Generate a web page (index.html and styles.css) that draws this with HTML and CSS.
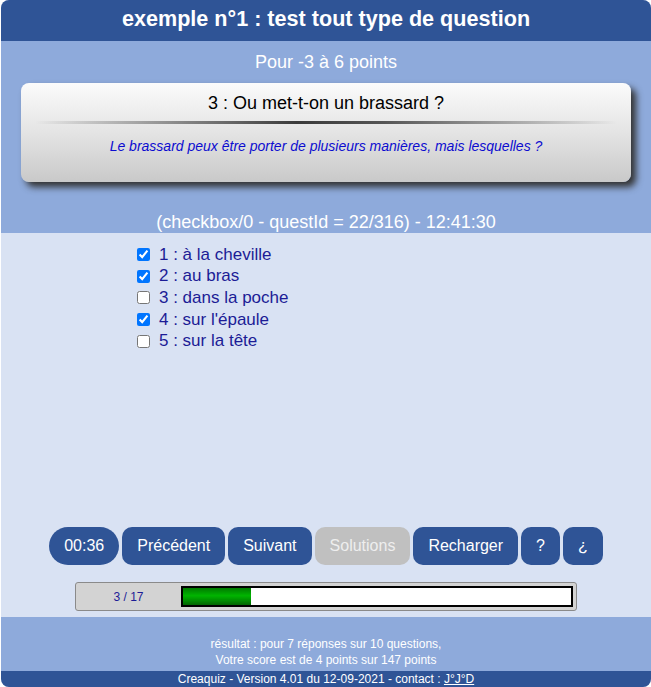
FILE: index.html
```html
<!DOCTYPE html>
<html lang="fr">
<head>
<meta charset="utf-8">
<title>Creaquiz</title>
<link rel="stylesheet" href="styles.css">
</head>
<body>
<div class="quiz">
  <div class="header">exemple n°1 : test tout type de question</div>
  <div class="top">
    <div class="points">Pour -3 à 6 points</div>
    <div class="card">
      <div class="card-title">3 : Ou met-t-on un brassard ?</div>
      <div class="sep"></div>
      <div class="card-desc">Le brassard peux être porter de plusieurs manières, mais lesquelles ?</div>
    </div>
    <div class="info">(checkbox/0 - questId = 22/316) - 12:41:30</div>
  </div>
  <div class="main">
    <div class="answers">
      <label class="answer"><input type="checkbox" checked> 1 : à la cheville</label>
      <label class="answer"><input type="checkbox" checked> 2 : au bras</label>
      <label class="answer"><input type="checkbox"> 3 : dans la poche</label>
      <label class="answer"><input type="checkbox" checked> 4 : sur l'épaule</label>
      <label class="answer"><input type="checkbox"> 5 : sur la tête</label>
    </div>
    <div class="buttons">
      <span class="btn pill">00:36</span>
      <span class="btn">Précédent</span>
      <span class="btn">Suivant</span>
      <span class="btn disabled">Solutions</span>
      <span class="btn">Recharger</span>
      <span class="btn">?</span>
      <span class="btn">¿</span>
    </div>
    <div class="progress">
      <div class="progress-label">3 / 17</div>
      <div class="progress-track"><div class="progress-fill" style="width:17.6%"></div></div>
    </div>
  </div>
  <div class="result">
    <div>résultat : pour 7 réponses sur 10 questions,</div>
    <div>Votre score est de 4 points sur 147 points</div>
  </div>
  <div class="footer">Creaquiz - Version 4.01 du 12-09-2021 - contact : <a href="#">J°J°D</a></div>
</div>
</body>
</html>
```

FILE: styles.css
```css
html, body {
  margin: 0;
  padding: 0;
  background: #ffffff;
}
body {
  font-family: "Liberation Sans", Arial, sans-serif;
}
.quiz {
  width: 650px;
  margin-left: 1px;
  border-radius: 8px;
  overflow: hidden;
  background: #d9e2f3;
}
.header {
  background: #2f5496;
  color: #ffffff;
  font-weight: bold;
  font-size: 21.6px;
  line-height: 26px;
  padding: 6px 0 9px;
  text-align: center;
}
.top {
  background: #8eaadb;
  padding: 11px 0 1px;
}
.points, .info {
  color: #ffffff;
  font-size: 18px;
  line-height: 20px;
  text-align: center;
}
.card {
  margin: 11px 20px 0 20px;
  height: 99px;
  box-sizing: border-box;
  border-radius: 8px;
  background: linear-gradient(to bottom, #fbfbfb 0%, #e4e4e4 50%, #c9c9c9 100%);
  box-shadow: 5px 5px 7px #333333;
  padding-top: 10px;
}
.card-title {
  text-align: center;
  font-size: 18px;
  line-height: 20px;
  color: #000000;
}
.sep {
  height: 3px;
  margin: 8px 14px 0;
  background: linear-gradient(to right, rgba(60,60,60,0) 0%, #3a3a3a 45%, #555555 60%, rgba(120,120,120,0) 100%);
  border-radius: 2px;
}
.card-desc {
  margin-top: 14px;
  text-align: center;
  font-size: 14px;
  line-height: 16px;
  font-style: italic;
  color: #0c0cd0;
}
.info {
  margin-top: 30px;
}
.main {
  background: #d9e2f3;
  padding-top: 11px;
  padding-bottom: 6px;
}
.answers {
  height: 283px;
  padding-left: 133px;
  display: flex;
  flex-direction: column;
}
.answer {
  display: flex;
  align-items: center;
  gap: 5px;
  height: 21.6px;
  font-size: 17px;
  color: #1c1c96;
}
.answer input {
  width: 13px;
  height: 13px;
  margin: 0 4px 0 3px;
}
.buttons {
  display: flex;
  justify-content: center;
  gap: 3px;
}
.btn {
  display: flex;
  align-items: center;
  height: 38px;
  padding: 0 15px;
  background: #2f5496;
  color: #ffffff;
  font-size: 16px;
  border-radius: 10px;
}
.btn.pill {
  border-radius: 19px;
}
.btn.disabled {
  background: #c0c0c0;
  color: #eeeeee;
}
.progress {
  margin: 17px 0 0 74px;
  width: 502px;
  height: 29px;
  box-sizing: border-box;
  border: 1px solid #8a8a8a;
  border-radius: 3px;
  background: #d3d3d3;
  display: flex;
  align-items: center;
}
.progress-label {
  width: 105px;
  text-align: center;
  font-size: 12px;
  color: #1c1c96;
}
.progress-track {
  width: 392px;
  height: 21px;
  box-sizing: border-box;
  border: 2px solid #000000;
  background: #ffffff;
  padding: 0 1px 0 0;
}
.progress-fill {
  height: 100%;
  background: linear-gradient(to bottom, #007a00 0%, #00b400 45%, #00a000 60%, #006400 100%);
}
.result {
  background: #8eaadb;
  color: #ffffff;
  font-size: 12px;
  line-height: 16px;
  text-align: center;
  padding: 19px 0 3px;
}
.footer {
  background: #2f5496;
  color: #ffffff;
  font-size: 12px;
  line-height: 16px;
  text-align: center;
}
.footer a {
  color: #ffffff;
}
```
